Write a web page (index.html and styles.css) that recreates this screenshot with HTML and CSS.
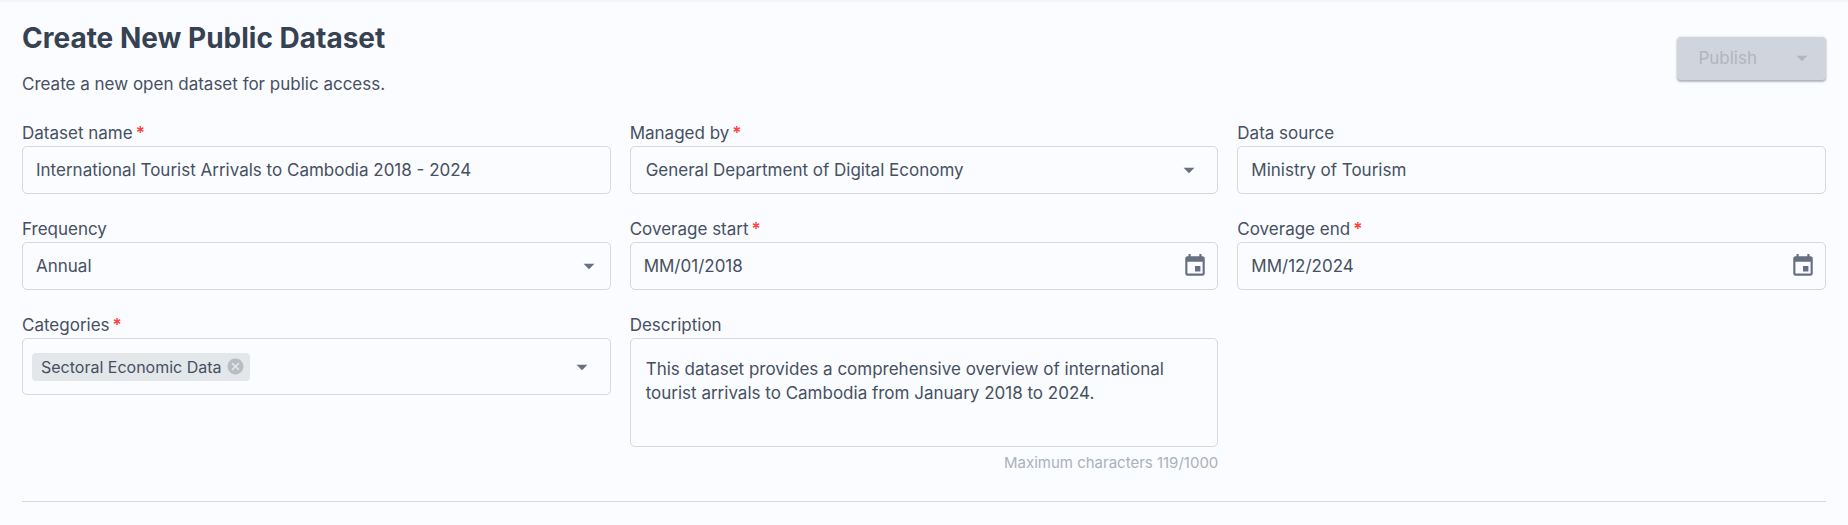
FILE: index.html
```html
<!DOCTYPE html>
<html lang="en">
<head>
<meta charset="utf-8">
<meta name="viewport" content="width=device-width, initial-scale=1">
<title>Create New Public Dataset</title>
<link rel="stylesheet" href="styles.css">
</head>
<body>
<main class="page">
  <header class="page-header">
    <div class="heading">
      <h1 class="title">Create New Public Dataset</h1>
      <p class="subtitle">Create a new open dataset for public access.</p>
    </div>
    <div class="split-button">
      <button class="publish" type="button" disabled>Publish</button>
      <button class="publish-menu" type="button" aria-label="Publish options" disabled>
        <svg class="icon" viewBox="0 0 24 24" aria-hidden="true"><path d="M7 10l5 5 5-5z"/></svg>
      </button>
    </div>
  </header>

  <form class="fields">
    <div class="field">
      <label class="label" for="name">Dataset name<span class="required">*</span></label>
      <div class="control">
        <input class="input" id="name" type="text" value="International Tourist Arrivals to Cambodia 2018 - 2024">
      </div>
    </div>
    <div class="field">
      <label class="label" for="managed">Managed by<span class="required">*</span></label>
      <div class="control">
        <select class="input roomy" id="managed"><option>General Department of Digital Economy</option></select>
        <svg class="icon arrow inset" viewBox="0 0 24 24" aria-hidden="true"><path d="M7 10l5 5 5-5z"/></svg>
      </div>
    </div>
    <div class="field">
      <label class="label" for="source">Data source</label>
      <div class="control">
        <input class="input" id="source" type="text" value="Ministry of Tourism">
      </div>
    </div>
    <div class="field">
      <label class="label" for="frequency">Frequency</label>
      <div class="control">
        <select class="input" id="frequency"><option>Annual</option></select>
        <svg class="icon arrow" viewBox="0 0 24 24" aria-hidden="true"><path d="M7 10l5 5 5-5z"/></svg>
      </div>
    </div>
    <div class="field">
      <label class="label" for="start">Coverage start<span class="required">*</span></label>
      <div class="control">
        <input class="input" id="start" type="text" value="MM/01/2018">
        <button class="calendar" type="button" aria-label="Choose start date">
          <svg class="calendar-icon" viewBox="0 0 24 24" aria-hidden="true"><path d="M19 3h-1V1h-2v2H8V1H6v2H5c-1.110 0-1.990.9-1.990 2L3 19c0 1.100.890 2 2 2h14c1.100 0 2-.9 2-2V5c0-1.100-.9-2-2-2zm0 16H5V8h14v11zM12 12h5v5h-5z"/></svg>
        </button>
      </div>
    </div>
    <div class="field">
      <label class="label" for="end">Coverage end<span class="required">*</span></label>
      <div class="control">
        <input class="input" id="end" type="text" value="MM/12/2024">
        <button class="calendar" type="button" aria-label="Choose end date">
          <svg class="calendar-icon" viewBox="0 0 24 24" aria-hidden="true"><path d="M19 3h-1V1h-2v2H8V1H6v2H5c-1.110 0-1.990.9-1.990 2L3 19c0 1.100.890 2 2 2h14c1.100 0 2-.9 2-2V5c0-1.100-.9-2-2-2zm0 16H5V8h14v11zM12 12h5v5h-5z"/></svg>
        </button>
      </div>
    </div>
    <div class="field">
      <label class="label" for="categories">Categories<span class="required">*</span></label>
      <div class="control tags">
        <span class="chip">Sectoral Economic Data
          <button class="chip-remove" type="button" aria-label="Remove Sectoral Economic Data">
            <svg class="chip-icon" viewBox="0 0 24 24" aria-hidden="true"><path d="M12 2C6.470 2 2 6.470 2 12s4.470 10 10 10 10-4.470 10-10S17.530 2 12 2zm5 13.590L15.590 17 12 13.410 8.410 17 7 15.590 10.590 12 7 8.410 8.410 7 12 10.590 15.590 7 17 8.410 13.410 12 17 15.590z"/></svg>
          </button>
        </span>
        <input class="tag-input" id="categories" type="text" role="combobox" aria-expanded="false">
        <button class="open" type="button" aria-label="Open categories">
          <svg class="icon" viewBox="0 0 24 24" aria-hidden="true"><path d="M7 10l5 5 5-5z"/></svg>
        </button>
      </div>
    </div>
    <div class="field">
      <label class="label" for="description">Description</label>
      <div class="control">
        <textarea class="textarea" id="description" rows="3">This dataset provides a comprehensive overview of international tourist arrivals to Cambodia from January 2018 to 2024.</textarea>
      </div>
      <p class="counter">Maximum characters 119/1000</p>
    </div>
  </form>
</main>
</body>
</html>
```

FILE: styles.css
```css
* {
  box-sizing: border-box;
}

body {
  margin: 0;
  background: #fafcff;
  color: #465061;
  font: 17px/24px Inter, "Liberation Sans", sans-serif;
  border-top: 2px solid #f2f4f6;
}

button,
input,
select,
textarea {
  margin: 0;
  padding: 0;
  border: 0;
  outline: 0;
  background: transparent;
  color: inherit;
  font: inherit;
}

.page {
  padding: 16px 22px;
}

.page-header {
  display: flex;
  justify-content: space-between;
  align-items: center;
  padding-bottom: 24px;
}

.title {
  margin: 0;
  color: #364152;
  font-size: 28px;
  line-height: 40px;
  font-weight: 700;
}

.subtitle {
  margin: 14px 0 0;
}

.split-button {
  display: flex;
  height: 43px;
  margin-top: 2px;
  border-radius: 4px;
  background: #d0d4dc;
  color: #b1b6c0;
  box-shadow: 0 2px 2px rgba(54, 65, 82, 0.35), 0 0 3px rgba(54, 65, 82, 0.16);
}

.publish {
  padding: 0 21px;
  font-weight: 400;
}

.publish-menu {
  display: flex;
  align-items: center;
  padding: 0 11px;
}

.icon {
  display: block;
  width: 26px;
  height: 26px;
  fill: currentColor;
}

.fields {
  display: grid;
  grid-template-columns: repeat(3, minmax(0, 1fr));
  align-items: start;
  gap: 22px 19px;
  padding-bottom: 28px;
  border-bottom: 1px solid #d4d8df;
}

.label {
  display: block;
  line-height: 26px;
}

.required {
  margin-left: 3px;
  color: #ff4040;
  font-weight: 600;
}

.control {
  position: relative;
  display: flex;
  align-items: center;
  border: 1px solid #d4d8df;
  border-radius: 5px;
}

.input {
  flex: 1;
  min-width: 0;
  height: 46px;
  padding: 0 13px;
  appearance: none;
}

.roomy {
  padding-left: 15px;
}

.arrow {
  position: absolute;
  right: 8px;
  pointer-events: none;
}

.inset {
  right: 15px;
}

.calendar {
  padding-right: 9px;
}

.calendar-icon {
  display: block;
  width: 26px;
  height: 26px;
  fill: #667080;
}

.arrow,
.open {
  color: #667080;
}

.tags {
  height: 57px;
  padding: 0 15px 0 9px;
}

.chip {
  display: flex;
  align-items: center;
  gap: 4px;
  height: 28px;
  padding: 0 5px 0 9px;
  border-radius: 4px;
  background: #e3e7ea;
  font-size: 16px;
}

.chip-icon {
  display: block;
  width: 19px;
  height: 19px;
  fill: #b8bdc4;
}

.tag-input {
  flex: 1;
  min-width: 0;
}

.textarea {
  flex: 1;
  display: block;
  height: 107px;
  padding: 18px 15px 16px;
  resize: none;
}

.counter {
  margin: 6px 0 0;
  color: #abb1bb;
  font-size: 15px;
  line-height: 20px;
  text-align: right;
}
```
